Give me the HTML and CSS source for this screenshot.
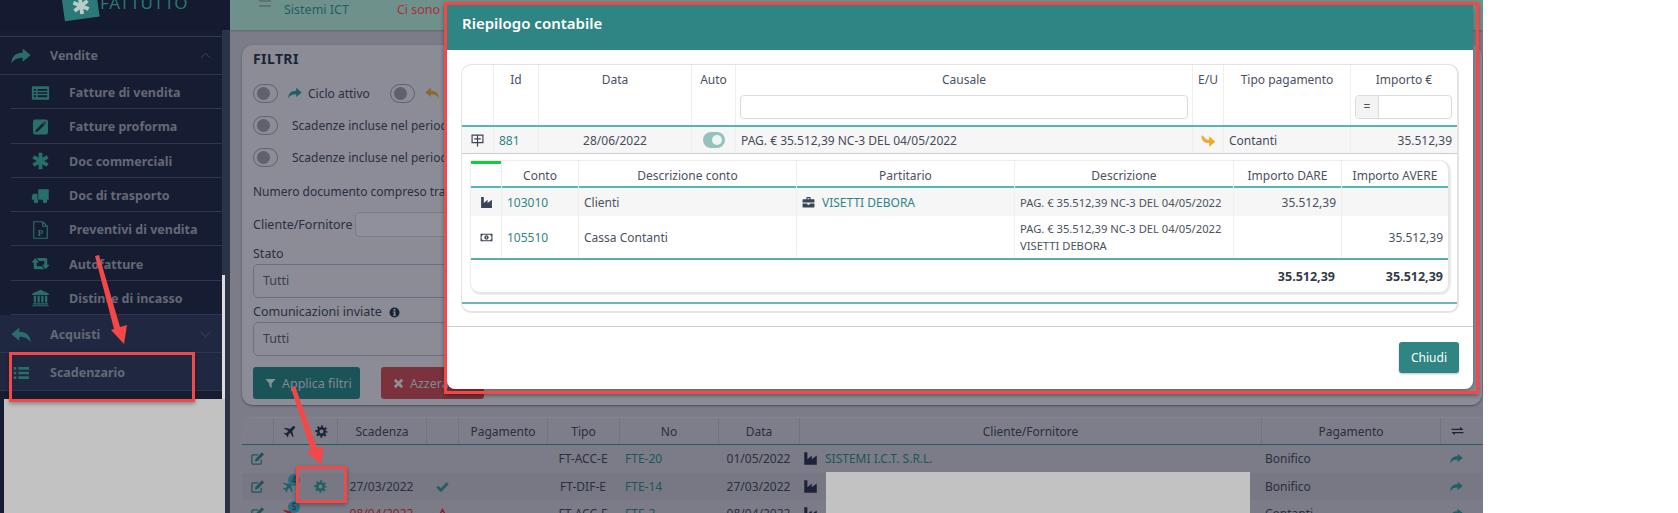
FILE: index.html
```html
<!DOCTYPE html>
<html lang="it">
<head>
<meta charset="utf-8">
<title>Riepilogo contabile</title>
<link rel="stylesheet" href="styles.css">
</head>
<body>
<svg class="defs" aria-hidden="true">
  <symbol id="i-share" viewBox="0 0 24 24"><path fill="currentColor" d="M14 3l9.500 8-9.500 8v-5C8 14 3.500 15.500 .5 21 .5 13 5 8 14 8z"/></symbol>
  <symbol id="i-reply" viewBox="0 0 24 24"><path fill="currentColor" d="M10 3L.5 11l9.500 8v-5c6 0 10.500 1.500 13.500 7 0-8-4.500-13-13.500-13z"/></symbol>
  <symbol id="i-replyturn" viewBox="0 0 24 24"><path fill="currentColor" d="M1 4c4-1 4 7 12 7V5l10 9-10 8v-6C5 16 0 12 1 4z"/></symbol>
  <symbol id="i-listalt" viewBox="0 0 24 24"><path fill="currentColor" fill-rule="evenodd" d="M2 3h20a1.500 1.500 0 011.500 1.500v15a1.500 1.500 0 01-1.500 1.500H2a1.500 1.500 0 01-1.500-1.500v-15A1.500 1.500 0 012 3zM3 6.500v2.500h3V6.500zM8 6.500v2.500h13V6.500zM3 11v2h3v-2zM8 11v2h13v-2zM3 15v2.500h3V15zM8 15v2.500h13V15z"/></symbol>
  <symbol id="i-pensq" viewBox="0 0 24 24"><path fill="currentColor" fill-rule="evenodd" d="M5 2h14a3 3 0 013 3v14a3 3 0 01-3 3H5a3 3 0 01-3-3V5a3 3 0 013-3zM15 6.500l-9 9-1 3.500 3.500-1 9-9zM16 5.500l2.500 2.500 1-1L17 4.500z"/></symbol>
  <symbol id="i-asterisk" viewBox="0 0 24 24"><path fill="none" stroke="currentColor" stroke-width="5" d="M12 1v22M2.500 6.500l19 11M2.500 17.500l19-11"/></symbol>
  <symbol id="i-truck" viewBox="0 0 24 24"><path fill="currentColor" d="M9 3h14v14H9zM2 9h6v8H.5v-4.500zM6 15.500a3 3 0 110 6 3 3 0 010-6zM18 15.500a3 3 0 110 6 3 3 0 010-6z"/></symbol>
  <symbol id="i-filep" viewBox="0 0 24 24"><path fill="none" stroke="currentColor" stroke-width="1.500" d="M3 1h12l6 6v16H3zM15 1v6h6"/><text x="12" y="20" text-anchor="middle" fill="currentColor" font-family="Liberation Serif" font-weight="700" font-size="12">P</text></symbol>
  <symbol id="i-retweet" viewBox="0 0 24 24"><path fill="currentColor" d="M5 4l5 6H7v5h7l3 4H5a2 2 0 01-2-2v-7H0zM7 4h12a2 2 0 012 2v7h3l-5 6-5-6h3V8h-7z"/></symbol>
  <symbol id="i-bank" viewBox="0 0 24 24"><path fill="currentColor" d="M12 1l11 5v2H1V6zM3 9h3v9H3zM8 9h3v9H8zM13 9h3v9h-3zM18 9h3v9h-3zM2 19h20v1.500H2zM1 21.500h22V23H1z"/></symbol>
  <symbol id="i-list" viewBox="0 0 24 24"><path fill="currentColor" d="M1 3h4v4H1zM8 3h16v4H8zM1 10h4v4H1zM8 10h16v4H8zM1 17h4v4H1zM8 17h16v4H8z"/></symbol>
  <symbol id="i-plane" viewBox="0 0 24 24"><path fill="currentColor" d="M21.500 2.500c-1-1-3-.5-4.500 1l-4 4L3.500 5 2 6.500l8 4.500-4 4-3-.5L1.500 16l4.500 2.500L8.500 23l1.500-1.500-.5-3 4-4 4.500 8 1.500-1.500L17 11l4-4c1.500-1.500 1.500-3.500.5-4.500z"/></symbol>
  <symbol id="i-cog" viewBox="0 0 24 24"><circle cx="12" cy="12" r="6" fill="none" stroke="currentColor" stroke-width="4.500"/><circle cx="12" cy="12" r="9.600" fill="none" stroke="currentColor" stroke-width="3.500" stroke-dasharray="3.800 3.740" stroke-dashoffset="1.900"/></symbol>
  <symbol id="i-check" viewBox="0 0 24 24"><path fill="none" stroke="currentColor" stroke-width="5" d="M2.500 12.500l6.500 6.500L21.500 6"/></symbol>
  <symbol id="i-warn" viewBox="0 0 24 24"><path fill="currentColor" fill-rule="evenodd" d="M12 2l11 20H1zM10.500 9l.5 7h2l.5-7zM11 17.500v2.500h2v-2.500z"/></symbol>
  <symbol id="i-exchange" viewBox="0 0 24 24"><path fill="currentColor" d="M1 7h16V3l6 6-6 0H1zM23 15H7v4l-6-6 6 0h16z"/></symbol>
  <symbol id="i-edit" viewBox="0 0 24 24"><path fill="none" stroke="currentColor" stroke-width="2" d="M18 14v5a2 2 0 01-2 2H5a2 2 0 01-2-2V8a2 2 0 012-2h8"/><path fill="currentColor" d="M19 2l3.500 3.500L12 16l-4 1 .5-4z"/></symbol>
  <symbol id="i-industry" viewBox="0 0 24 24"><path fill="currentColor" d="M2 2h5v11l7-6v6l8-6v15H2z"/></symbol>
  <symbol id="i-money" viewBox="0 0 24 24"><path fill="currentColor" fill-rule="evenodd" d="M1 5h22v14H1zM5 7a2 2 0 01-2 2v6a2 2 0 012 2h14a2 2 0 012-2V9a2 2 0 01-2-2zM12 8a4 4 0 110 8 4 4 0 010-8zM11.500 10v4h1.500v-4z"/></symbol>
  <symbol id="i-brief" viewBox="0 0 24 24"><path fill="currentColor" fill-rule="evenodd" d="M8 6V3.500A1.500 1.500 0 019.500 2h5A1.500 1.500 0 0116 3.500V6h6a1 1 0 011 1v5H1V7a1 1 0 011-1zM10 4v2h4V4zM1 14h9v2h4v-2h9v6a1 1 0 01-1 1H2a1 1 0 01-1-1z"/></symbol>
  <symbol id="i-filter" viewBox="0 0 24 24"><path fill="currentColor" d="M1 2h22l-8.500 10v10L9.500 18v-6z"/></symbol>
  <symbol id="i-times" viewBox="0 0 24 24"><path fill="none" stroke="currentColor" stroke-width="6" d="M4 4l16 16M20 4L4 20"/></symbol>
  <symbol id="i-info" viewBox="0 0 24 24"><path fill="currentColor" fill-rule="evenodd" d="M12 1a11 11 0 110 22 11 11 0 010-22zM10 4.500v3.500h4V4.500zM8.500 10v2h2v5h-2v2h7v-2h-1.500v-7z"/></symbol>
  <symbol id="i-up" viewBox="0 0 24 24"><path fill="none" stroke="currentColor" stroke-width="1.600" d="M2 17L12 7l10 10"/></symbol>
  <symbol id="i-down" viewBox="0 0 24 24"><path fill="none" stroke="currentColor" stroke-width="1.600" d="M2 7l10 10L22 7"/></symbol>
  <symbol id="i-row" viewBox="0 0 24 24"><path fill="none" stroke="currentColor" stroke-width="2.200" d="M2 2h20v14H2zM12 2v21M6 9h12"/></symbol>
</svg>

<div class="app">
  <aside class="sidebar">
    <div class="logo">
      <span class="logo-mark"><svg class="logo-star"><use href="#i-asterisk"/></svg></span>
      <span class="logo-text">FATTUTTO</span>
    </div>
    <div class="side-body">
      <nav class="menu">
        <div class="parent"><svg class="p-ico"><use href="#i-share"/></svg><span class="p-label">Vendite</span><svg class="chev"><use href="#i-up"/></svg></div>
        <div class="item"><svg class="i-ico"><use href="#i-listalt"/></svg><span>Fatture di vendita</span></div>
        <div class="item"><svg class="i-ico"><use href="#i-pensq"/></svg><span>Fatture proforma</span></div>
        <div class="item"><svg class="i-ico"><use href="#i-asterisk"/></svg><span>Doc commerciali</span></div>
        <div class="item"><svg class="i-ico"><use href="#i-truck"/></svg><span>Doc di trasporto</span></div>
        <div class="item"><svg class="i-ico"><use href="#i-filep"/></svg><span>Preventivi di vendita</span></div>
        <div class="item"><svg class="i-ico"><use href="#i-retweet"/></svg><span>Autofatture</span></div>
        <div class="item"><svg class="i-ico"><use href="#i-bank"/></svg><span>Distinte di incasso</span></div>
        <div class="parent lit"><svg class="p-ico"><use href="#i-reply"/></svg><span class="p-label">Acquisti</span><svg class="chev"><use href="#i-down"/></svg></div>
        <div class="parent lit"><svg class="p-ico dim"><use href="#i-list"/></svg><span class="p-label">Scadenzario</span></div>
      </nav>
      <div class="scroll"><div class="thumb"></div></div>
    </div>
    <div class="side-redact"></div>
  </aside>

  <main class="main">
    <header class="topbar">
      <svg class="burger" viewBox="0 0 12 8"><path d="M0 1h12M0 6h12" stroke="currentColor" stroke-width="1.200"/></svg>
      <span class="company">Sistemi ICT</span>
      <span class="notice">Ci sono 2</span>
    </header>

    <section class="filters">
      <h2 class="f-title">FILTRI</h2>
      <div class="f-row tight">
        <span class="switch"></span><svg class="f-ico teal"><use href="#i-share"/></svg><span class="f-cycle">Ciclo attivo</span>
        <span class="switch second"></span><svg class="f-ico amber"><use href="#i-reply"/></svg>
      </div>
      <div class="f-row"><span class="switch"></span><span class="f-text">Scadenze incluse nel period</span></div>
      <div class="f-row"><span class="switch"></span><span class="f-text">Scadenze incluse nel period</span></div>
      <div class="f-num">Numero documento compreso tra</div>
      <div class="f-client"><span>Cliente/Fornitore</span><span class="f-input"></span></div>
      <div class="f-lab">Stato</div>
      <div class="f-select">Tutti</div>
      <div class="f-lab two">Comunicazioni inviate <svg class="f-info"><use href="#i-info"/></svg></div>
      <div class="f-select">Tutti</div>
      <div class="f-btns">
        <span class="btn apply"><svg class="b-ico"><use href="#i-filter"/></svg>Applica filtri</span>
        <span class="btn reset"><svg class="b-ico"><use href="#i-times"/></svg>Azzera</span>
      </div>
    </section>

    <section class="list">
      <div class="lrow lhead">
        <div class="c"></div>
        <div class="c duo"><svg class="h-ico"><use href="#i-plane"/></svg><svg class="h-ico"><use href="#i-cog"/></svg></div>
        <div class="c ctr">Scadenza</div><div class="c"></div><div class="c ctr">Pagamento</div>
        <div class="c ctr">Tipo</div><div class="c ctr">No</div><div class="c ctr">Data</div>
        <div class="c ctr">Cliente/Fornitore</div><div class="c ctr">Pagamento</div>
        <div class="c ctr"><svg class="h-ico"><use href="#i-exchange"/></svg></div>
      </div>
      <div class="lrow">
        <div class="c ctr"><svg class="r-ico edit"><use href="#i-edit"/></svg></div><div class="c"></div>
        <div class="c ctr"></div><div class="c"></div><div class="c"></div>
        <div class="c ctr">FT-ACC-E</div><div class="c"><a class="tl no">FTE-20</a></div><div class="c ctr">01/05/2022</div>
        <div class="c"><svg class="r-ico dark"><use href="#i-industry"/></svg><a class="tl">SISTEMI I.C.T. S.R.L.</a></div>
        <div class="c">Bonifico</div><div class="c ctr"><svg class="r-ico tealx"><use href="#i-share"/></svg></div>
      </div>
      <div class="lrow alt">
        <div class="c ctr"><svg class="r-ico edit"><use href="#i-edit"/></svg></div>
        <div class="c duo"><span class="plane-wrap"><svg class="r-ico tealx"><use href="#i-plane"/></svg><span class="badge">4</span></span><svg class="r-ico tealx"><use href="#i-cog"/></svg></div>
        <div class="c ctr">27/03/2022</div><div class="c ctr"><svg class="r-ico tealx"><use href="#i-check"/></svg></div><div class="c"></div>
        <div class="c ctr">FT-DIF-E</div><div class="c"><a class="tl no">FTE-14</a></div><div class="c ctr">27/03/2022</div>
        <div class="c"><svg class="r-ico dark"><use href="#i-industry"/></svg></div>
        <div class="c">Bonifico</div><div class="c ctr"><svg class="r-ico tealx"><use href="#i-share"/></svg></div>
      </div>
      <div class="lrow">
        <div class="c ctr"><svg class="r-ico edit"><use href="#i-edit"/></svg></div>
        <div class="c duo"><span class="plane-wrap"><svg class="r-ico redx"><use href="#i-plane"/></svg><span class="badge">5</span></span></div>
        <div class="c ctr redt">08/04/2022</div><div class="c ctr"><svg class="r-ico redx"><use href="#i-warn"/></svg></div><div class="c"></div>
        <div class="c ctr">FT-ACC-E</div><div class="c"><a class="tl no">FTE-2</a></div><div class="c ctr">08/04/2022</div>
        <div class="c"><svg class="r-ico dark"><use href="#i-industry"/></svg></div>
        <div class="c">Contanti</div><div class="c ctr"><svg class="r-ico tealx"><use href="#i-share"/></svg></div>
      </div>
    </section>
  </main>
</div>

<div class="redact"></div>

<div class="modal">
  <div class="m-head">Riepilogo contabile</div>
  <div class="m-body">
    <div class="card">
      <div class="mrow mhead">
        <div class="m"></div>
        <div class="m">Id</div>
        <div class="m">Data</div>
        <div class="m">Auto</div>
        <div class="m">Causale<span class="m-input"></span></div>
        <div class="m">E/U</div>
        <div class="m">Tipo pagamento</div>
        <div class="m">Importo €<span class="m-group"><span class="m-eq">=</span><span class="m-field"></span></span></div>
      </div>
      <div class="mrow mdata">
        <div class="m mid"><svg class="row-ico"><use href="#i-row"/></svg></div>
        <div class="m mid left"><a class="lnk">881</a></div>
        <div class="m mid">28/06/2022</div>
        <div class="m mid"><span class="tog"></span></div>
        <div class="m mid left">PAG. € 35.512,39 NC-3 DEL 04/05/2022</div>
        <div class="m mid"><svg class="eu-ico"><use href="#i-replyturn"/></svg></div>
        <div class="m mid left">Contanti</div>
        <div class="m mid right">35.512,39</div>
      </div>
      <div class="detail-wrap">
        <div class="detail">
          <div class="drow dhead">
            <div class="d flag"></div>
            <div class="d">Conto</div><div class="d">Descrizione conto</div><div class="d">Partitario</div>
            <div class="d">Descrizione</div><div class="d">Importo DARE</div><div class="d">Importo AVERE</div>
          </div>
          <div class="drow shade">
            <div class="d mid"><svg class="d-ico"><use href="#i-industry"/></svg></div>
            <div class="d mid left"><a class="lnk">103010</a></div>
            <div class="d mid left">Clienti</div>
            <div class="d mid left"><svg class="d-ico brief"><use href="#i-brief"/></svg><a class="lnk">VISETTI DEBORA</a></div>
            <div class="d mid left small">PAG. € 35.512,39 NC-3 DEL 04/05/2022</div>
            <div class="d mid right">35.512,39</div><div class="d mid right"></div>
          </div>
          <div class="drow tall">
            <div class="d mid"><svg class="d-ico"><use href="#i-money"/></svg></div>
            <div class="d mid left"><a class="lnk">105510</a></div>
            <div class="d mid left">Cassa Contanti</div>
            <div class="d mid left"></div>
            <div class="d mid left small">PAG. € 35.512,39 NC-3 DEL 04/05/2022<br>VISETTI DEBORA</div>
            <div class="d mid right"></div><div class="d mid right">35.512,39</div>
          </div>
          <div class="dtotal"><b>35.512,39</b><b>35.512,39</b></div>
        </div>
      </div>
      <div class="card-end"></div>
    </div>
  </div>
  <div class="m-foot"><span class="close">Chiudi</span></div>
</div>

<div class="mark mark-modal"></div>
<div class="mark mark-side"></div>
<div class="mark mark-gear"></div>
<svg class="arrows" viewBox="0 0 1678 513">
  <path d="M95 256l4-1 21 72 7-2-3 19-13-14 3-1z"/>
  <path d="M291 388l4-2 22 62 7-1-3 18-14-13 4-2z"/>
</svg>
</body>
</html>
```
FILE: styles.css
```css
* { box-sizing: border-box; }
html, body { margin: 0; padding: 0; }
body {
  width: 1678px; height: 513px; overflow: hidden; background: #fff; position: relative;
  font-family: "Noto Sans", "Open Sans", "Liberation Sans", sans-serif; font-size: 12px; color: #3d4553;
}
.defs { position: absolute; width: 0; height: 0; }
.app { display: flex; width: 1483px; height: 513px; background: #7b7c88; }

/* sidebar */
.sidebar { width: 230px; height: 513px; background: #161d33; display: flex; flex-direction: column; position: relative; flex: none; }
.logo { height: 30px; overflow: hidden; display: flex; align-items: flex-start; gap: 2px; padding-left: 63px; background: #141b30; }
.logo-mark { width: 35px; height: 26px; margin-top: -7px; background: #2b7a78; transform: rotate(-8deg); display: flex; align-items: center; justify-content: center; flex: none; }
.logo-star { width: 18px; height: 18px; color: #b9cccc; }
.logo-text { font-size: 17px; letter-spacing: .8px; color: #2a7674; line-height: 17px; margin-top: -6px; }
.side-body { display: flex; margin-top: 6px; flex: 1; }
.menu { width: 222px; border-top: 1px solid #333a50; }
.scroll { width: 8px; background: #2b3347; margin-top: -6px; }
.thumb { width: 3px; height: 124px; margin-top: 245px; background: #dcdcdc; }
.parent { height: 38px; display: flex; align-items: center; border-bottom: 1px solid #2f364c; color: #656876; font-weight: 700; font-size: 12.500px; }
.parent.lit { background: #1f2840; padding-top: 2px; }
.p-ico { width: 20px; height: 20px; margin-left: 11px; color: #2a6e6c; flex: none; }
.p-ico.dim { width: 18px; height: 16px; margin-left: 12px; margin-right: 1px; }
.p-label { margin-left: 19px; flex: 1; }
.chev { width: 11px; height: 11px; margin-right: 11px; color: #4f5567; }
.item { height: 34.300px; margin-left: 11px; padding-top: 2px; display: flex; align-items: center; border-bottom: 1px solid #2f364c; color: #656876; font-weight: 700; font-size: 12.500px; }
.i-ico { width: 19px; height: 18px; margin-left: 20px; margin-right: 19px; color: #2a6e6c; flex: none; }
.side-redact { position: absolute; left: 4px; top: 399px; width: 221px; bottom: 0; background: #c2c2c2; }

/* main */
.main { flex: 1; min-width: 0; display: flex; flex-direction: column; overflow: hidden; }
.topbar { height: 30px; background: #6f918c; display: flex; align-items: flex-start; box-shadow: 0 1px 2px rgba(0,0,0,.2); flex: none; font-size: 12.500px; line-height: 20px; }
.burger { width: 12px; height: 8px; margin-left: 29px; margin-top: 0; color: #4d5a62; }
.company { margin-left: 13px; color: #1f5f5f; }
.notice { margin-left: 48px; color: #a9303c; }
.filters { margin: 15px 1px 0 12px; height: 360px; flex: none; background: #8b8c96; border-radius: 11px; padding: 5px 11px; box-shadow: 0 1px 2px rgba(30,30,50,.5); }
.f-title { margin: 0; font-size: 14px; font-weight: 700; line-height: 18px; color: #1d2438; letter-spacing: .4px; }
.f-row { display: flex; align-items: center; height: 32px; }
.f-row.tight { margin-top: 9px; }
.switch { width: 25px; height: 19px; border: 1px solid #5e606c; border-radius: 10px; position: relative; flex: none; }
.switch::after { content: ""; position: absolute; left: 3px; top: 2px; width: 13px; height: 13px; border-radius: 50%; background: #5f616d; }
.switch.second { margin-left: 20px; }
.f-ico { width: 14px; height: 14px; margin-left: 10px; margin-right: 6px; flex: none; }
.teal { color: #1f6065; }
.amber { color: #8a6a2a; }
.f-cycle, .f-text { color: #2a2f3e; font-size: 12px; white-space: nowrap; }
.f-cycle { padding-top: 1px; }
.f-text { margin-left: 14px; }
.f-num { margin-top: 9px; line-height: 20px; color: #2a2f3e; font-size: 12px; }
.f-client { display: flex; align-items: center; gap: 2px; margin-top: 10px; color: #2a2f3e; font-size: 12.500px; }
.f-input { width: 400px; height: 25px; border: 1px solid #7a7b86; border-radius: 4px; background: #8f9099; }
.f-lab { margin-top: 7px; line-height: 20px; color: #2a2f3e; font-size: 12.500px; display: flex; align-items: center; gap: 7px; }
.f-lab.two { margin-top: 4px; }
.f-info { width: 11px; height: 11px; color: #1c2338; }
.f-select { height: 34px; border: 1px solid #6e6f7a; border-radius: 5px; padding-left: 9px; line-height: 32px; color: #3a3e4c; font-size: 12.500px; }
.f-btns { display: flex; gap: 21px; margin-top: 11px; }
.btn { height: 32px; border-radius: 3px; display: flex; align-items: center; color: #7f8a93; font-size: 12.500px; white-space: nowrap; }
.apply { width: 107px; background: #1a5458; padding-left: 12px; }
.reset { width: 103px; background: #7c323c; padding-left: 12px; }
.b-ico { width: 11px; height: 11px; margin-right: 6px; color: #8a9096; flex: none; }

.list { margin: 13px 0 0 12px; background: #7b7c88; border-radius: 11px 0 0 0; flex: 1; box-shadow: 0 -1px 2px rgba(255,255,255,.08); }
.lrow { display: grid; grid-template-columns: 31px 64px 89px 32px 89px 72px 99px 81px 462px 179px 33px; height: 27.500px; align-items: center; color: #2a2f3e; font-size: 12px; }
.lhead { height: 27px; background: #7d7e8a; border-radius: 11px 0 0 0; border-bottom: 1px solid #1f5f63; }
.lrow.alt { background: #777884; }
.lrow .c { padding: 0 4px; height: 100%; display: flex; align-items: center; white-space: nowrap; min-width: 0; }
.lhead .c { border-left: 1px solid #72737e; }
.lhead .c:first-child { border-left: 0; }
.lrow .ctr { justify-content: center; padding: 0; }
.lrow .duo { padding: 0 0 0 9px; gap: 19px; }
.h-ico { width: 13px; height: 13px; color: #1c2338; flex: none; }
.r-ico { width: 13px; height: 13px; color: #1f5558; flex: none; }
.r-ico.edit { width: 15px; height: 15px; }
.r-ico.dark { width: 15px; height: 15px; color: #1c2338; margin-right: 7px; }
.tealx { color: #1f6065; }
.redx { color: #8b1f2a; }
.redt { color: #8b1f2a; }
.tl { color: #1f5558; }
.tl.no { margin-left: 2px; }
.plane-wrap { position: relative; display: flex; }
.badge { position: absolute; left: 6px; top: -6px; width: 12px; height: 12px; border-radius: 50%; background: #2b6c80; color: #14303a; font-size: 8px; line-height: 12px; text-align: center; }
.redact { position: absolute; left: 826px; top: 472px; width: 424px; height: 41px; background: #c2c2c2; }

/* modal */
.modal { position: absolute; left: 447px; top: 5px; width: 1026px; height: 384px; background: #fff; border-radius: 0 0 8px 8px; display: flex; flex-direction: column; box-shadow: 0 2px 6px rgba(0,0,0,.3); }
.m-head { height: 45px; background: #2f8583; color: #fff; font-weight: 600; font-size: 15px; line-height: 37px; padding-left: 15px; flex: none; }
.m-body { padding: 14px 14px 0; height: 277px; flex: none; border-bottom: 1px solid #cfcfcf; }
.card { width: 998px; height: 249px; border: 1px solid #e4e4e4; border-bottom-width: 2px; border-right-width: 2px; border-radius: 10px; display: flex; flex-direction: column; overflow: hidden; }
.mrow { display: grid; grid-template-columns: 31px 45px 153px 44px 457px 31px 127px 107px; flex: none; }
.mhead { height: 62px; border-bottom: 2px solid #55b6b6; }
.m { text-align: center; border-left: 1px solid #efefef; padding-top: 6px; line-height: 17px; color: #4a5160; min-width: 0; }
.m:first-child { border-left: 0; }
.m-input { display: block; height: 24px; margin: 7px 4px 0 4px; border: 1px solid #d8dbe0; border-radius: 4px; }
.m-group { display: flex; height: 24px; margin: 7px 5px 0 4px; border: 1px solid #d8dbe0; border-radius: 4px; overflow: hidden; }
.m-eq { width: 23px; background: #f3f3f4; border-right: 1px solid #d8dbe0; line-height: 22px; }
.m-field { flex: 1; }
.mdata { height: 27px; background: #f6f6f6; border-bottom: 1px solid #c8ccd3; }
.mid { padding: 0 5px; display: flex; align-items: center; justify-content: center; color: #454c5a; white-space: nowrap; line-height: 17px; }
.left { justify-content: flex-start; }
.right { justify-content: flex-end; }
.lnk { color: #2f8583; }
.row-ico { width: 13px; height: 13px; color: #3d4553; }
.tog { width: 22px; height: 16px; border-radius: 8px; background: #96c2bd; position: relative; }
.tog::after { content: ""; position: absolute; right: 3px; top: 3px; width: 10px; height: 10px; border-radius: 50%; background: #eef5f4; }
.eu-ico { width: 15px; height: 15px; color: #f0a92b; }
.detail-wrap { padding: 7px 8px 0 9px; flex: none; }
.detail { width: 979px; height: 133px; border: 1px solid #e6e6e6; border-width: 0 2px 2px 0; border-radius: 0 10px 10px 10px; box-shadow: 0 0 1px 1px #ececec; overflow: hidden; position: relative; }
.drow { display: grid; grid-template-columns: 30px 77px 218px 218px 219px 108px 107px; }
.dhead { height: 27px; border-bottom: 2px solid #55b6b6; }
.shade { height: 28px; background: #f6f6f6; }
.tall { height: 44px; border-bottom: 2px solid #55adad; }
.d { text-align: center; border-left: 1px solid #efefef; line-height: 29px; color: #4a5160; min-width: 0; }
.d:first-child { border-left: 0; }
.d.mid { padding: 0 5px; line-height: 17px; display: flex; align-items: center; }
.d.small { font-size: 11.200px; text-align: left; }
.flag { border-top: 3px solid #0ecf3f; }
.d-ico { width: 13px; height: 13px; color: #3a4456; flex: none; }
.brief { margin-right: 7px; }
.dtotal { display: flex; justify-content: flex-end; height: 32px; align-items: center; font-size: 12.500px; color: #333a48; }
.dtotal b { width: 108px; text-align: right; padding-right: 5px; font-weight: 700; }
.card-end { margin-top: 8px; height: 2px; background: #6fb3b3; flex: none; }
.m-foot { flex: 1; display: flex; justify-content: flex-end; padding: 15px 14px 0 0; }
.close { width: 60px; height: 31px; border-radius: 3px; background: #2f8583; color: #fff; text-align: center; line-height: 32px; font-size: 12px; box-shadow: 0 1px 2px rgba(0,0,0,.25); }

/* annotations */
.mark { position: absolute; border: 3px solid #f44848; box-shadow: 0 2px 4px rgba(0,0,0,.3); }
.mark-modal { left: 444px; top: 2px; width: 1035px; height: 392px; }
.mark-side { left: 9px; top: 352px; width: 186px; height: 50px; }
.mark-gear { left: 296px; top: 466px; width: 51px; height: 37px; }
.arrows { position: absolute; left: 0; top: 0; width: 1678px; height: 513px; fill: #f44848; }
```
